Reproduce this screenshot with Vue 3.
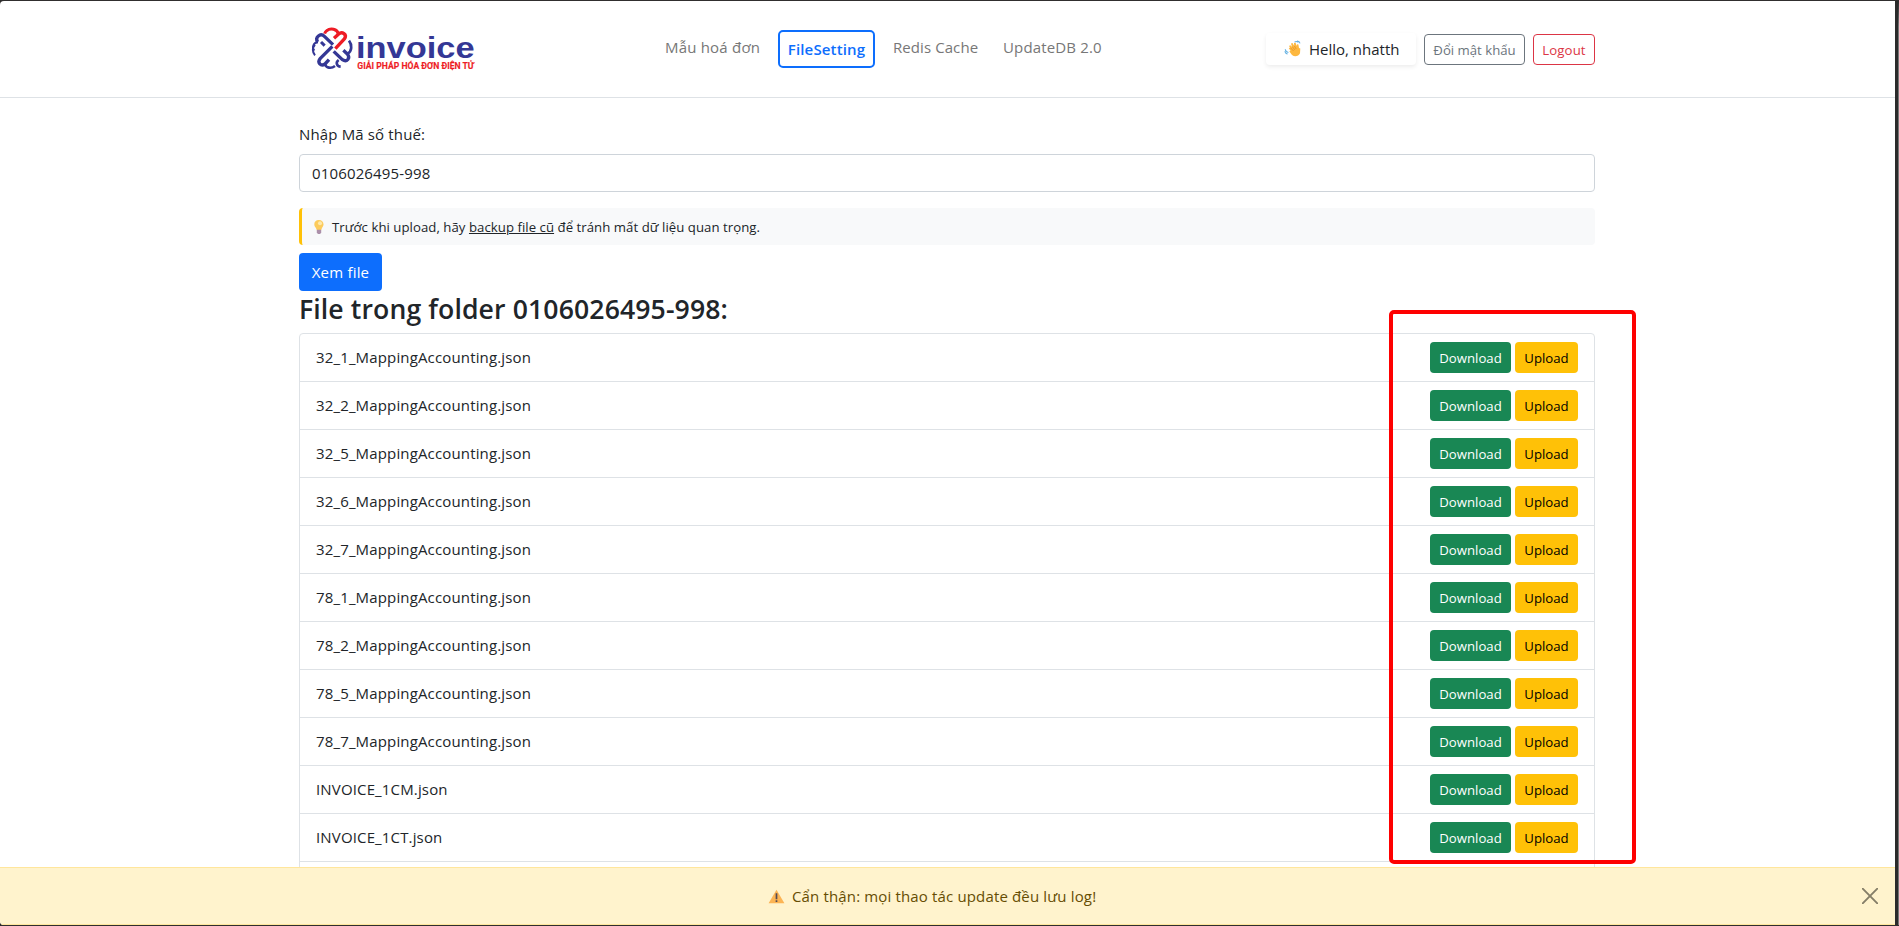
<script setup>
const files = [
  '32_1_MappingAccounting.json',
  '32_2_MappingAccounting.json',
  '32_5_MappingAccounting.json',
  '32_6_MappingAccounting.json',
  '32_7_MappingAccounting.json',
  '78_1_MappingAccounting.json',
  '78_2_MappingAccounting.json',
  '78_5_MappingAccounting.json',
  '78_7_MappingAccounting.json',
  'INVOICE_1CM.json',
  'INVOICE_1CT.json',
  ''
]
const taxCode = '0106026495-998'
</script>

<template>
  <div class="window">
    <div class="page">
      <header class="header">
        <div class="container bar">
          <svg class="logo" viewBox="0 0 630 240" width="210" height="80">
            <g fill="none" stroke="#343795" stroke-width="9" stroke-linejoin="round">
              <path d="M129 104 L104 80 C91 67 74 82 83 96" stroke-width="10" />
              <path d="M84 97 C69 98 65 113 73 122 M75 104 C66 112 67 127 75 136" stroke-width="6" />
              <path d="M93 96 L104 107" />
              <path d="M127 109 L91 145 C80 158 93 170 105 162 L117 149" stroke-width="10" />
              <path d="M105 163 C109 174 123 177 135 168" stroke-width="8" />
              <path d="M131 124 L157 149 C171 158 182 144 172 132 L160 121" stroke-width="10" />
              <path d="M173 131 C186 123 187 105 177 92" stroke-width="8" />
              <path d="M146 150 C136 157 140 169 152 170" stroke-width="8" />
            </g>
            <g fill="none" stroke="#ee1c25" stroke-width="10">
              <path d="M136 116 L163 87 C173 73 156 63 146 72 L132 85" />
              <path d="M145 72 C142 56 121 54 110 62 C107 64 105 67 104 71" stroke-width="9" />
            </g>
            <text class="brand" x="198" y="143" textLength="356" lengthAdjust="spacingAndGlyphs">invoice</text>
            <text class="tag" x="202" y="177" textLength="350" lengthAdjust="spacingAndGlyphs">GIẢI PHÁP HÓA ĐƠN ĐIỆN TỬ</text>
          </svg>
          <nav class="nav">
            <a class="link first">Mẫu hoá đơn</a>
            <a class="link active">FileSetting</a>
            <a class="link redis">Redis Cache</a>
            <a class="link">UpdateDB 2.0</a>
          </nav>
          <div class="user">
            <div class="hello">
              <svg viewBox="0 0 18 18" width="18" height="18">
                <path d="M5 6 6.3 5.2 8 7 7 3.6 8.5 3 10.2 6 10 3 11.6 2.8 12.6 6 13 4.2 14.4 4.4 15 8 16.3 8.6 16 13.2C14.7 16.4 10.7 17.2 8 15L5.4 11.5 6.5 10.6 4.8 8.4 6 7.6Z" fill="#fdb83f" />
                <path d="M6.5 7.8 9.6 11 M8.3 6.7 10.9 9.9 M10.2 5.7 12.2 9" stroke="#dc8b25" stroke-width=".7" fill="none" />
                <path d="M10.5 2.1Q12.5.7 14.4 2.4M13 1Q15.4.8 16 3.3M1.3 9.3Q1.5 12 4.4 12.5M.7 11.4Q1.6 13.8 3.6 14" stroke="#67b2e2" stroke-width="1.1" fill="none" />
              </svg>
              <span>Hello, nhatth</span>
            </div>
            <button class="btn outline gray">Đổi mật khẩu</button>
            <button class="btn outline red">Logout</button>
          </div>
        </div>
      </header>

      <main class="container">
        <label class="label">Nhập Mã số thuế:</label>
        <div class="input"><span>{{ taxCode }}</span></div>
        <div class="hint">
          <svg viewBox="0 0 12 16" width="12" height="16">
            <path d="M2.8 8.7C-.2 5.5 1.5 1 5.8 1s6.3 4.5 3.3 7.7L8 11.5H4Z" fill="#fccb5c" />
            <circle cx="7" cy="4.3" r="2" fill="#ffe9a8" />
            <path d="M3.8 10.8h4.4v3L7 15H5l-1.2-1.2Z" fill="#ab8fa9" />
          </svg>
          <span class="hint-text">Trước khi upload, hãy <u>backup file cũ</u> để tránh mất dữ liệu quan trọng.</span>
        </div>
        <button class="view">Xem file</button>
        <h3 class="title">File trong folder {{ taxCode }}:</h3>
        <ul class="list">
          <li v-for="(file, i) in files" :key="i" class="row">
            <span class="name">{{ file }}</span>
            <div v-if="file" class="actions">
              <button class="btn download">Download</button>
              <button class="btn upload">Upload</button>
            </div>
          </li>
        </ul>
      </main>

      <div class="marker"></div>

      <div class="alert">
        <svg viewBox="0 0 17 15" width="17" height="15">
          <path d="M8.5.8 16.4 14.3H.6Z" fill="#fcb454" />
          <path d="M8.5 4.2v6M8.5 11.3v1.6" stroke="#534a55" stroke-width="1.7" />
        </svg>
        <span>Cẩn thận: mọi thao tác update đều lưu log!</span>
        <svg class="close" viewBox="0 0 16 16" width="16" height="16">
          <path d="M.7.7 15.3 15.3M15.3.7.7 15.3" stroke="#857e68" stroke-width="1.9" stroke-linecap="round" />
        </svg>
      </div>
    </div>
    <div class="edge"></div>
  </div>
</template>

<style>
html, body { margin: 0; overflow: hidden; background: #2b2b2b; }
</style>

<style scoped>
* { box-sizing: border-box; }
.window {
  width: 1899px; height: 926px; padding: 1px 0; display: flex; background: #302e2e;
  font: 15px/24px "Open Sans", "Noto Sans", sans-serif; letter-spacing: .15px; color: #212529; overflow: hidden;
}
.page { position: relative; width: 1895px; height: 924px; background: #fff; overflow: hidden; border-radius: 4px 0 0 4px; }
.edge { width: 4px; height: 924px; background: #2b2b2b; border-right: 1px solid #777; border-top: 25px solid #2b2b2b; }
.container { width: 1296px; margin-left: 299px; }
.header { height: 97px; border-bottom: 1px solid #dee2e6; }
.bar { display: flex; align-items: flex-start; height: 96px; }
.logo { margin: 9px 0 0 -9px; flex: none; letter-spacing: 0; }
.brand { font: 700 88px "Liberation Sans", Arial, sans-serif; fill: #343795; }
.tag { font: 700 25px Roboto, "Open Sans", sans-serif; fill: #ee1c25; stroke: #ee1c25; stroke-width: .4; }
.nav { display: flex; margin: 29px 0 0 165px; width: 440px; flex: none; white-space: nowrap; }
.link { color: #777; height: 37px; line-height: 34px; width: 97px; }
.link.first { width: 113px; letter-spacing: .2px; }
.link.active { width: 97px; height: 38px; line-height: 34px; border: 2px solid #0d6efd; border-radius: 5px; color: #0d6efd; font-weight: 600; text-align: center; margin-right: 18px; }
.link.redis { width: 110px; letter-spacing: .08px; }
.user { display: flex; gap: 8px; margin: 33px 0 0 auto; flex: none; }
.hello { width: 150px; height: 32px; margin-top: -1px; border-radius: 4px; box-shadow: 0 2px 4px rgba(0,0,0,.075); display: flex; align-items: center; padding-left: 18px; gap: 7px; white-space: nowrap; letter-spacing: 0; }
.btn { height: 31px; border: 0; border-radius: 4px; font: 13.2px/29px "Open Sans", "Noto Sans", sans-serif; padding: 1px 0 0; white-space: nowrap; text-align: center; }
.outline { background: #fff; border: 1px solid; line-height: 28px; }
.gray { width: 101px; color: #6c757d; }
.red { width: 62px; color: #dc3545; letter-spacing: .1px; }
.label { display: block; height: 32px; margin-top: 24px; }
.input { height: 38px; border: 1px solid #ced4da; border-radius: 4px; padding: 6px 12px; }
.hint { margin-top: 16px; height: 37px; border-left: 3px solid #ffc107; border-radius: 4px; background: #f8f9fa; display: flex; align-items: center; padding-left: 11px; gap: 7px; font-size: 13.2px; letter-spacing: .04px; }
.view { display: block; width: 83px; height: 38px; margin-top: 8px; border: 0; border-radius: 4px; background: #0d6efd; color: #fff; font: 15px/24px "Open Sans", sans-serif; letter-spacing: .2px; padding: 0; }
.title { margin: 0; padding-top: 1px; font-size: 26.6px; line-height: 34px; height: 42px; font-weight: 600; letter-spacing: .12px; white-space: nowrap; }
.list { list-style: none; margin: 0; padding: 0; border: 1px solid #dee2e6; border-radius: 4px; }
.row { height: 48px; padding: 0 16px; display: flex; align-items: center; justify-content: space-between; border-bottom: 1px solid #dee2e6; }
.name { padding-bottom: 1px; }
.actions { display: flex; gap: 4px; }
.download { width: 81px; color: #fff; background: #198754; }
.upload { width: 63px; color: #000; background: #ffc107; }
.marker { position: absolute; left: 1389px; top: 309px; width: 247px; height: 554px; border: 4px solid #fe0000; border-radius: 5px; }
.alert { position: absolute; left: 0; right: 0; bottom: 0; height: 58px; background: #fff3cd; border-top: 1px solid #ffe69c; border-bottom: 1px solid #ffe69c; color: #664d03; display: flex; align-items: center; padding-left: 768px; gap: 7px; white-space: nowrap; }
.close { position: absolute; left: 1862px; top: 20px; }
</style>
